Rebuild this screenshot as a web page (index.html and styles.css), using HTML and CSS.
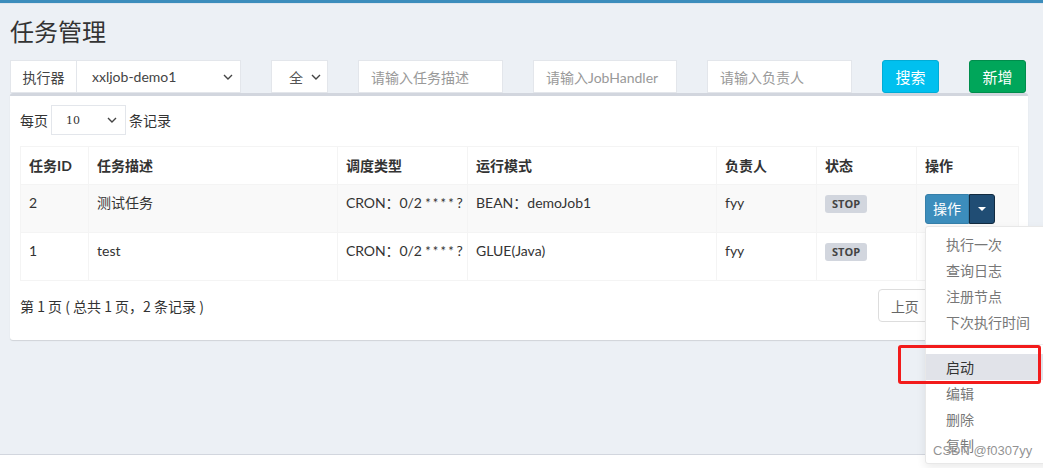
FILE: index.html
```html
<!DOCTYPE html>
<html lang="zh-CN">
<head>
<meta charset="utf-8">
<title>任务管理</title>
<link rel="stylesheet" href="styles.css">
</head>
<body>
<div class="wrapper">
  <div class="topbar"></div>
  <main class="content">
    <h1 class="page-title">任务管理</h1>
    <div class="filters">
      <div class="group">
        <span class="addon">执行器</span>
        <div class="select select-exec"><span>xxljob-demo1</span><svg class="chev" width="10" height="6" viewBox="0 0 10 6"><path d="M1 1l4 4 4-4" fill="none" stroke="#444" stroke-width="1.4"/></svg></div>
      </div>
      <div class="select select-status"><span class="clip">全</span><svg class="chev" width="10" height="6" viewBox="0 0 10 6"><path d="M1 1l4 4 4-4" fill="none" stroke="#444" stroke-width="1.4"/></svg></div>
      <div class="input w145">请输入任务描述</div>
      <div class="input w144">请输入JobHandler</div>
      <div class="input w145">请输入负责人</div>
      <div class="btn btn-info">搜索</div>
      <div class="btn btn-success">新增</div>
    </div>
    <section class="box">
      <div class="length">
        <span>每页</span>
        <div class="select select-len"><span>10</span><svg class="chev" width="10" height="6" viewBox="0 0 10 6"><path d="M1 1l4 4 4-4" fill="none" stroke="#444" stroke-width="1.4"/></svg></div>
        <span>条记录</span>
      </div>
      <table class="table">
        <colgroup>
          <col class="c1"><col class="c2"><col class="c3"><col class="c4"><col class="c5"><col class="c6"><col class="c7">
        </colgroup>
        <thead>
          <tr><th>任务ID</th><th>任务描述</th><th>调度类型</th><th>运行模式</th><th>负责人</th><th>状态</th><th>操作</th></tr>
        </thead>
        <tbody>
          <tr class="odd">
            <td>2</td><td>测试任务</td><td class="cron">CRON：0/2 <span class="stars">* * * *</span> ?</td><td>BEAN：demoJob1</td><td>fyy</td>
            <td><span class="label">STOP</span></td>
            <td>
              <div class="btn-group">
                <span class="bg-main">操作</span><span class="bg-toggle"><span class="caret"></span></span>
                <ul class="menu">
                  <li>执行一次</li>
                  <li>查询日志</li>
                  <li>注册节点</li>
                  <li>下次执行时间</li>
                  <li class="divider"></li>
                  <li class="hover">启动</li>
                  <li>编辑</li>
                  <li>删除</li>
                  <li>复制</li>
                </ul>
              </div>
            </td>
          </tr>
          <tr>
            <td>1</td><td>test</td><td class="cron">CRON：0/2 <span class="stars">* * * *</span> ?</td><td>GLUE(Java)</td><td>fyy</td>
            <td><span class="label">STOP</span></td>
            <td></td>
          </tr>
        </tbody>
      </table>
      <div class="footer-row">
        <span class="info">第 1 页 ( 总共 1 页，2 条记录 )</span>
        <div class="pager"><span class="pg first">上页</span><span class="pg">1</span><span class="pg last">下页</span></div>
      </div>
    </section>
  </main>
  <footer class="main-footer"></footer>
</div>
<div class="annot"></div>
<div class="watermark">CSDN @f0307yy</div>
</body>
</html>
```
FILE: styles.css
```css
html, body {
  margin: 0;
  padding: 0;
  height: 468px;
  overflow: hidden;
}
body {
  background: #ecf0f5;
  font-family: "Source Sans Pro", Lato, "Noto Sans CJK SC", sans-serif;
  font-size: 14px;
  color: #333;
  position: relative;
}
.wrapper {
  height: 468px;
  display: flex;
  flex-direction: column;
}
.topbar {
  height: 3px;
  background: #3c8dbc;
  border-bottom: 1px solid #dfe6ee;
}
.content {
  flex: 1;
  padding: 0 15px 0 10px;
}
.page-title {
  margin: 11px 0 0;
  font-size: 24px;
  font-weight: 400;
  line-height: 32px;
  color: #333;
  font-family: "Noto Sans CJK SC", sans-serif;
}
.filters {
  display: flex;
  gap: 30px;
  margin-top: 13px;
  height: 33px;
}
.group {
  display: flex;
  width: 231px;
}
.addon {
  width: 66px;
  box-sizing: border-box;
  background: #fff;
  border: 1px solid #e3e6eb;
  border-right: none;
  display: flex;
  align-items: center;
  justify-content: center;
  color: #444;
}
.select {
  background: #fff;
  border: 1px solid #e3e6eb;
  box-sizing: border-box;
  display: flex;
  align-items: center;
  justify-content: space-between;
  color: #444;
}
.select-exec {
  flex: 1;
  padding: 0 7px 0 15px;
}
.select-status {
  width: 57px;
  padding: 0 6px 0 17px;
}
.clip {
  display: inline-block;
  width: 14px;
  white-space: nowrap;
  color: #555;
}
.input {
  background: #fff;
  border: 1px solid #e3e6eb;
  box-sizing: border-box;
  color: #999;
  display: flex;
  align-items: center;
  padding-left: 12px;
}
.w145 { width: 145px; }
.w144 { width: 144px; }
.btn {
  width: 57px;
  box-sizing: border-box;
  border-radius: 3px;
  color: #fff;
  display: flex;
  align-items: center;
  justify-content: center;
  font-size: 15px;
}
.btn-info { background: #00c0ef; border: 1px solid #00acd6; }
.btn-success { background: #00a65a; border: 1px solid #008d4c; }

.box {
  background: #fff;
  border-top: 3px solid #d2d6de;
  border-radius: 3px;
  box-shadow: 0 1px 1px rgba(0,0,0,0.12);
  padding: 9px 10px 18px;
  position: relative;
}
.length {
  display: flex;
  align-items: center;
  gap: 3px;
  height: 30px;
}
.select-len {
  width: 75px;
  height: 30px;
  padding: 0 8px 0 14px;
  font-size: 11px;
  font-family: "DejaVu Serif", serif;
  color: #333;
}
.table {
  width: 998px;
  margin-top: 11px;
  border-collapse: collapse;
  table-layout: fixed;
  border: 1px solid #f4f4f4;
}
.c1 { width: 68px; }
.c2 { width: 249px; }
.c3 { width: 130px; }
.c4 { width: 249px; }
.c5 { width: 100px; }
.c6 { width: 100px; }
.c7 { width: 102px; }
.table th, .table td {
  border: 1px solid #f4f4f4;
  padding: 7px 8px 0;
  text-align: left;
  vertical-align: top;
  line-height: 22px;
  white-space: nowrap;
}
.table th {
  font-weight: 700;
  height: 29px;
  padding-top: 8px;
}
.table td {
  height: 40px;
}
.cron {
  letter-spacing: -0.1px;
}
.stars {
  font-size: 13px;
  letter-spacing: -0.6px;
}
.table tr.odd td { background: #f9f9f9; }
.label {
  display: inline-block;
  margin-top: 3px;
  background: #d2d6de;
  color: #444;
  font-weight: 700;
  font-size: 11px;
  line-height: 18px;
  height: 18px;
  padding: 0 7px;
  border-radius: 3px;
  font-family: "Open Sans", sans-serif;
}
.btn-group {
  position: relative;
  display: flex;
  height: 30px;
  margin-top: 2px;
}
.bg-main {
  width: 44px;
  box-sizing: border-box;
  background: #3c8dbc;
  border: 1px solid #367fa9;
  border-radius: 3px 0 0 3px;
  color: #fff;
  display: flex;
  align-items: center;
  justify-content: center;
}
.bg-toggle {
  width: 26px;
  box-sizing: border-box;
  background: #204d74;
  border: 1px solid #122b40;
  border-radius: 0 3px 3px 0;
  display: flex;
  align-items: center;
  justify-content: center;
}
.caret {
  width: 0;
  height: 0;
  border-left: 4px solid transparent;
  border-right: 4px solid transparent;
  border-top: 4px solid #fff;
}
.menu {
  position: absolute;
  left: 0;
  top: 32px;
  z-index: 10;
  margin: 0;
  padding: 4px 0 5px;
  list-style: none;
  width: 160px;
  background: #fff;
  border: 1px solid #e8e8e8;
  border-radius: 3px;
  box-shadow: 0 4px 10px rgba(0,0,0,0.08);
  font-family: "Noto Sans CJK SC", sans-serif;
}
.menu li {
  height: 26px;
  line-height: 26px;
  padding-left: 20px;
  color: #777;
  font-size: 14px;
}
.menu li.divider {
  height: 1px;
  margin: 9px 0;
  padding: 0;
  background: #eee;
}
.menu li.hover {
  background: #e1e3e9;
  color: #333;
}
.footer-row {
  display: flex;
  justify-content: space-between;
  align-items: center;
  margin-top: 8px;
  height: 33px;
}
.info {
  font-family: "Noto Sans CJK SC", sans-serif;
  font-size: 14px;
  color: #333;
}
.pager {
  display: flex;
  margin-right: 0;
}
.pg {
  height: 33px;
  box-sizing: border-box;
  border: 1px solid #ddd;
  margin-left: -1px;
  padding: 0 12px;
  display: flex;
  align-items: center;
  color: #666;
  background: #fff;
}
.pg.first { border-radius: 4px 0 0 4px; }
.pg.last { border-radius: 0 4px 4px 0; }
.main-footer {
  height: 13px;
  background: #fff;
  border-top: 1px solid #d2d6de;
}
.annot {
  position: absolute;
  z-index: 20;
  left: 898px;
  top: 345px;
  width: 137px;
  height: 33px;
  border: 3px solid #f21b1b;
  border-radius: 3px;
}
.watermark {
  position: absolute;
  z-index: 20;
  left: 933px;
  top: 443px;
  font-family: "Liberation Sans", sans-serif;
  font-size: 13px;
  color: rgba(110,110,110,0.75);
  text-shadow: 0 0 2px #fff;
}
```
